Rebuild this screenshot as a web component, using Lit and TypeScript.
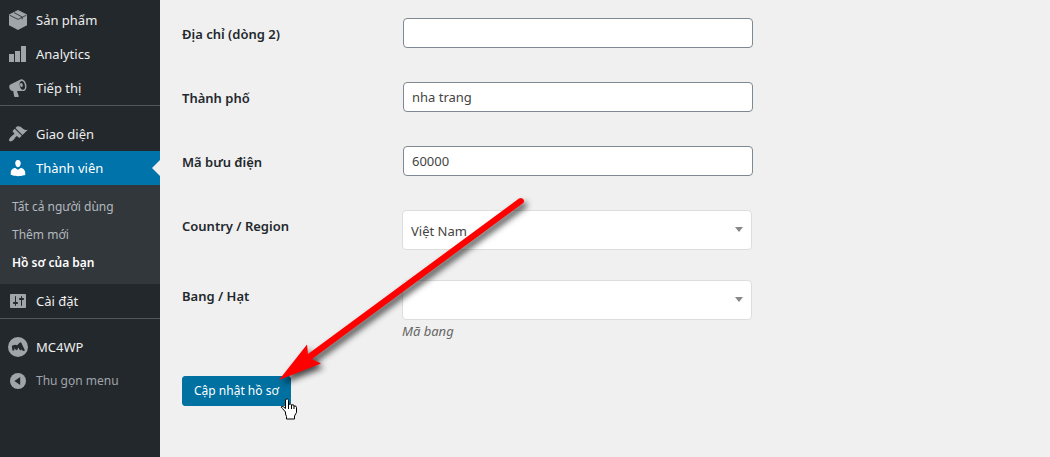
import { LitElement, html, svg, css } from "lit";
import { customElement, property } from "lit/decorators.js";
import { classMap } from "lit/directives/class-map.js";

const icons = {
  product: svg`
    <path d="M10 0 19 4.600V15.200L10 20 1 15.200V4.600Z" />
    <path d="M1.600 5.200 10 9.400 18.400 5.200M6 2.600l8.200 4.400v2.400" fill="none" stroke="#23282d" stroke-width=".8" />`,
  chart: svg`<path d="M18 18V2h-5v16zM12 18V7H7v11zM6 18v-8H1v8z" />`,
  megaphone: svg`
    <path d="M12.500 1.500C15 .6 17.400 3 18.200 6.200 19 9.600 18 12.300 15.800 12.900L9 13l1.800 5.200-.5.800H6.800l-.6-.6-1-5.400C3.200 13.200 1.800 11.600 1.400 9.800 1 8.200 1.400 7.200 2.400 6.600Z" />
    <ellipse cx="14.300" cy="7.400" rx="2.500" ry="4.400" transform="rotate(-14 14.300 7.400)" fill="#23282d" />
    <ellipse cx="13.400" cy="7" rx="1.400" ry="2.100" transform="rotate(-14 13.400 7)" />`,
  brush: svg`<path d="M14.48 11.06L7.41 3.99l1.5-1.5c.5-.56 2.3-.47 3.51.32 1.21.8 1.43 1.28 2.91 2.1 1.18.64 2.45 1.26 4.45.85zm-.71.71L6.7 4.7 4.93 6.47c-.39.39-.39 1.02 0 1.41l1.06 1.06c.39.39.39 1.03 0 1.42-.6.6-1.43 1.11-2.21 1.69-.35.26-.7.53-1.01.84C1.43 14.23.4 16.08 1.4 17.07c.99 1 2.84-.03 4.18-1.36.31-.31.58-.66.85-1.02.57-.78 1.08-1.61 1.69-2.21.39-.39 1.02-.39 1.41 0l1.06 1.06c.39.39 1.02.39 1.41 0z" />`,
  user: svg`<path d="M10 9.25c-2.27 0-2.73-3.44-2.73-3.44C7 4.02 7.82 2 9.97 2c2.16 0 2.98 2.02 2.71 3.81 0 0-.41 3.44-2.68 3.44zm0 2.57L12.72 10c2.39 0 4.52 2.33 4.52 4.53v2.49s-3.65 1.13-7.24 1.13c-3.65 0-7.24-1.13-7.24-1.13v-2.49c0-2.25 1.94-4.48 4.47-4.48z" />`,
  settings: svg`<path d="M18 16V4c0-.55-.45-1-1-1H3c-.55 0-1 .45-1 1v12c0 .55.45 1 1 1h14c.55 0 1-.45 1-1zM8 11h1c.55 0 1 .45 1 1s-.45 1-1 1H8v1.5c0 .28-.22.5-.5.5s-.5-.22-.5-.5V13H6c-.55 0-1-.45-1-1s.45-1 1-1h1V5.5c0-.28.22-.5.5-.5s.5.22.5.5V11zm5-2h-1c-.55 0-1-.45-1-1s.45-1 1-1h1V5.5c0-.28.22-.5.5-.5s.5.22.5.5V7h1c.55 0 1 .45 1 1s-.45 1-1 1h-1v5.5c0 .28-.22.5-.5.5s-.5-.22-.5-.5V9z" />`,
  mailchimp: svg`
    <circle cx="10" cy="10" r="10" />
    <path d="M3.800 8.800 7 7.800 9.200 8.200 11.600 5.800 13 5.200 17 13.400 15 14 13.600 12.400 12 13.400 10.400 10.400 9 13.200 7.400 12.600 6.600 11 6.200 13.600 4.400 13.400Z" fill="#23282d" />`,
  collapse: svg`
    <circle cx="10" cy="10" r="8" />
    <path d="M12.200 6v8L6.400 10z" fill="#23282d" />`,
};

type IconName = keyof typeof icons;

@customElement("menu-item")
class MenuItem extends LitElement {
  @property() icon: IconName = "product";
  @property() label = "";
  @property({ type: Boolean }) active = false;
  @property({ type: Boolean }) action = false;

  static styles = css`
    :host {
      display: block;
    }
    .item {
      position: relative;
      display: flex;
      align-items: center;
      gap: 8px;
      box-sizing: border-box;
      width: 100%;
      height: 34px;
      padding: 0 8px;
      border: 0;
      background: none;
      color: #eee;
      font: inherit;
      text-decoration: none;
      cursor: pointer;
    }
    .icon {
      flex: none;
      width: 20px;
      height: 20px;
      fill: #a0a5aa;
    }
    .active {
      background: #0073aa;
      color: #fff;
    }
    .active .icon {
      fill: #fff;
    }
    .active::after {
      content: "";
      position: absolute;
      right: 0;
      top: 9px;
      border: 8px solid transparent;
      border-left: 0;
      border-right-color: #f0f0f0;
    }
    .action {
      color: #a0a5aa;
      font-size: 12px;
    }
  `;

  render() {
    const body = html`
      <svg class="icon" viewBox="0 0 20 20" aria-hidden="true">${icons[this.icon]}</svg>
      <span>${this.label}</span>
    `;
    return this.action
      ? html`<button class="item action" type="button">${body}</button>`
      : html`<a class=${classMap({ item: true, active: this.active })} href="#">${body}</a>`;
  }
}

@customElement("app-root")
class AppRoot extends LitElement {
  static styles = css`
    :host {
      display: flex;
      position: relative;
      min-height: 100vh;
      overflow: hidden;
      background: #f0f0f0;
      color: #23282d;
      font: 13px/20px "Noto Sans", "Open Sans", sans-serif;
    }
    .sidebar {
      flex: none;
      box-sizing: border-box;
      width: 160px;
      padding-top: 3px;
      background: #23282d;
    }
    .separator {
      height: 1px;
      margin: 0 0 11px;
      border: 0;
      background: #50565a;
    }
    .submenu {
      margin: 0;
      padding: 8px 0 7px;
      background: #32373c;
      list-style: none;
    }
    .submenu a {
      display: block;
      padding: 4px 12px;
      color: #b4b9be;
      font-size: 12px;
      text-decoration: none;
    }
    .submenu .current {
      color: #fff;
      font-weight: 600;
    }
    .content {
      flex: 1;
      padding: 18px 22px;
    }
    .rows {
      display: grid;
      gap: 34px;
    }
    .row {
      display: grid;
      grid-template-columns: 221px minmax(0, 350px);
    }
    .row.choice {
      grid-template-columns: 220px minmax(0, 350px);
    }
    .choice + .choice {
      margin-top: -4px;
    }
    .label {
      padding-top: 6px;
      font-weight: 600;
    }
    .input {
      box-sizing: border-box;
      width: 100%;
      height: 30px;
      padding: 0 8px;
      border: 1px solid #7e8993;
      border-radius: 4px;
      background: #fff;
      color: #444;
      font: inherit;
    }
    .picker {
      position: relative;
    }
    .select {
      display: block;
      box-sizing: border-box;
      width: 100%;
      height: 40px;
      padding: 2px 24px 0 8px;
      border: 1px solid #ddd;
      border-radius: 4px;
      background: #fff;
      color: #444;
      font: inherit;
      appearance: none;
    }
    .picker::after {
      content: "";
      position: absolute;
      top: 17px;
      right: 9px;
      border: 4px solid transparent;
      border-top: 5px solid #888;
      border-bottom: 0;
      pointer-events: none;
    }
    .hint {
      margin: 1px 0 0;
      color: #666;
      font-style: italic;
    }
    .submit {
      height: 30px;
      margin-top: 35px;
      padding: 0 11px;
      border: 1px solid #0071a1;
      border-radius: 3px;
      background: #0071a1;
      color: #fff;
      font: inherit;
      font-size: 12px;
      cursor: pointer;
    }
    .overlay {
      position: absolute;
      pointer-events: none;
    }
    .arrow {
      left: 270px;
      top: 190px;
      width: 270px;
      height: 210px;
      filter: drop-shadow(3px 4px 3px rgba(0, 0, 0, 0.7));
    }
    .pointer {
      left: 280px;
      top: 398px;
      width: 18px;
      height: 22px;
    }
  `;

  render() {
    return html`
      <nav class="sidebar">
        <menu-item icon="product" label="Sản phẩm"></menu-item>
        <menu-item icon="chart" label="Analytics"></menu-item>
        <menu-item icon="megaphone" label="Tiếp thị"></menu-item>
        <hr class="separator" />
        <menu-item icon="brush" label="Giao diện"></menu-item>
        <menu-item icon="user" label="Thành viên" active></menu-item>
        <ul class="submenu">
          <li><a href="#">Tất cả người dùng</a></li>
          <li><a href="#">Thêm mới</a></li>
          <li><a class="current" href="#">Hồ sơ của bạn</a></li>
        </ul>
        <menu-item icon="settings" label="Cài đặt"></menu-item>
        <hr class="separator" />
        <menu-item icon="mailchimp" label="MC4WP"></menu-item>
        <menu-item icon="collapse" label="Thu gọn menu" action></menu-item>
      </nav>
      <form class="content">
        <div class="rows">
          <div class="row">
            <label class="label" for="address2">Địa chỉ (dòng 2)</label>
            <input class="input" id="address2" type="text" />
          </div>
          <div class="row">
            <label class="label" for="city">Thành phố</label>
            <input class="input" id="city" type="text" value="nha trang" />
          </div>
          <div class="row">
            <label class="label" for="postcode">Mã bưu điện</label>
            <input class="input" id="postcode" type="text" value="60000" />
          </div>
          <div class="row choice">
            <label class="label" for="country">Country / Region</label>
            <div class="picker">
              <select class="select" id="country"><option>Việt Nam</option></select>
            </div>
          </div>
          <div class="row choice">
            <label class="label" for="state">Bang / Hạt</label>
            <div class="picker">
              <select class="select" id="state"><option></option></select>
              <p class="hint">Mã bang</p>
            </div>
          </div>
        </div>
        <button class="submit" type="button">Cập nhật hồ sơ</button>
      </form>
      <svg class="overlay arrow" viewBox="270 190 270 210" aria-hidden="true">
        <path d="M279 380 307 344.500 308 354 519 198.500Q522 197 523.500 199.500T522.500 203.500L312 359 321 363.500Z" fill="#f00" />
      </svg>
      <svg class="overlay pointer" viewBox="0 0 18 22" aria-hidden="true">
        <path
          d="M5.500 14 2.500 10.500Q.5 9 1.500 8.500 3 8 5.500 10.500V2Q6 .5 7.500 1 8.500 1.500 8.500 2.500V6.500Q11 5 11.500 7 14 6 14 8 16.500 7.500 16.500 9.500V14.500L14.500 18V21H6.500V18.500L5.500 16Z"
          fill="#fff" stroke="#000" />
        <path d="M8.500 6v5M11.500 7v4M14 8v3" fill="none" stroke="#000" />
      </svg>
    `;
  }
}
